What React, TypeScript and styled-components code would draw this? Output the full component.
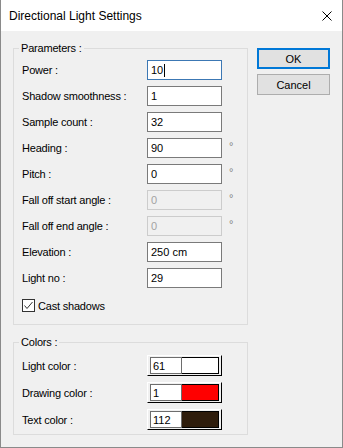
import React from 'react';
import styled, { createGlobalStyle } from 'styled-components';

const Global = createGlobalStyle`
  html, body { margin: 0; padding: 0; background: #fff; }
  #root { width: 343px; height: 448px; }
`;

const Window = styled.div`
  width: 343px;
  height: 448px;
  box-sizing: border-box;
  border: 1px solid #8a8a8a;
  border-top: none;
  display: flex;
  flex-direction: column;
  background: #f0f0f0;
  font-family: "Liberation Sans", Arial, sans-serif;
  color: #000;
`;

const TitleBar = styled.div`
  height: 31px;
  flex: none;
  background: #fff;
  display: flex;
  align-items: center;
  justify-content: space-between;
  padding: 1px 10px 0 8px;
  box-sizing: border-box;
`;

const Title = styled.span`
  font-size: 12px;
`;

const CloseIcon = styled.svg`
  width: 10px;
  height: 10px;
  display: block;
`;

const Body = styled.div`
  flex: 1;
  display: flex;
  align-items: flex-start;
  gap: 9px;
  padding: 11px 12px 0 12px;
`;

const LeftCol = styled.div`
  width: 235px;
  display: flex;
  flex-direction: column;
  gap: 11px;
`;

const Group = styled.fieldset`
  margin: 0;
  padding: 0;
  border: 1px solid #dcdcdc;
  min-width: 0;
  box-sizing: border-box;
  width: 235px;
`;

const Legend = styled.legend`
  margin-left: 5px;
  padding: 0 2px;
  font-size: 11px;
  line-height: 13px;
  letter-spacing: -0.2px;
`;

const GroupContent = styled.div<{ $pt: number; $pb: number; $gap: number }>`
  display: flex;
  flex-direction: column;
  gap: ${(p) => p.$gap}px;
  padding: ${(p) => p.$pt}px 0 ${(p) => p.$pb}px 8px;
`;

const Row = styled.div<{ $h: number }>`
  display: flex;
  align-items: center;
  height: ${(p) => p.$h}px;
`;

const Label = styled.span`
  width: 125px;
  flex: none;
  font-size: 11px;
  letter-spacing: -0.2px;
  white-space: nowrap;
`;

const TextBox = styled.div<{ $state?: 'focus' | 'disabled' }>`
  width: 75px;
  height: 20px;
  box-sizing: border-box;
  border: 1px solid
    ${(p) => (p.$state === 'focus' ? '#3c78b4' : p.$state === 'disabled' ? '#cccccc' : '#7a7a7a')};
  background: ${(p) => (p.$state === 'disabled' ? '#f0f0f0' : '#fff')};
  color: ${(p) => (p.$state === 'disabled' ? '#a3a3a3' : '#000')};
  font-size: 11px;
  padding-left: 3px;
  display: flex;
  align-items: center;
`;

const Caret = styled.span`
  display: inline-block;
  width: 1px;
  height: 13px;
  background: #000;
  margin-left: 1px;
`;

const Degree = styled.span`
  align-self: flex-start;
  margin-left: 7px;
  margin-top: 2px;
  font-size: 11px;
  line-height: 13px;
  color: #808080;
`;

const CheckRow = styled.label`
  display: flex;
  align-items: center;
  gap: 3px;
  height: 17px;
  margin-top: 3px;
  font-size: 11px;
  letter-spacing: -0.2px;
`;

const CheckBox = styled.span`
  width: 13px;
  height: 13px;
  box-sizing: border-box;
  border: 1px solid #333;
  background: #fff;
  display: flex;
  align-items: center;
  justify-content: center;
`;

const ColorFrame = styled.div`
  width: 75px;
  height: 21px;
  box-sizing: border-box;
  border: 1px solid;
  border-color: #fff #000 #000 #fff;
  padding: 1px 2px 1px 2px;
  display: flex;
`;

const ColorText = styled.div`
  width: 32px;
  box-sizing: border-box;
  border: 1px solid #6d6d6d;
  background: #fff;
  font-size: 11px;
  padding-left: 2px;
  display: flex;
  align-items: center;
`;

const Swatch = styled.div<{ $color: string }>`
  flex: 1;
  border: 1px solid #000;
  border-left: none;
  background: ${(p) => p.$color};
`;

const ButtonCol = styled.div`
  display: flex;
  flex-direction: column;
  gap: 5px;
  margin-top: 6px;
`;

const Button = styled.button<{ $default?: boolean }>`
  width: 73px;
  height: 21px;
  box-sizing: border-box;
  margin: 0;
  padding: 0;
  background: #e1e1e1;
  border: ${(p) => (p.$default ? '2px solid #0078d7' : '1px solid #adadad')};
  font-family: "Liberation Sans", Arial, sans-serif;
  font-size: 11px;
  color: #000;
`;

type Param = { label: string; value: string; state?: 'focus' | 'disabled'; degree?: boolean };

const params: Param[] = [
  { label: 'Power :', value: '10', state: 'focus' },
  { label: 'Shadow smoothness :', value: '1' },
  { label: 'Sample count :', value: '32' },
  { label: 'Heading :', value: '90', degree: true },
  { label: 'Pitch :', value: '0', degree: true },
  { label: 'Fall off start angle :', value: '0', state: 'disabled', degree: true },
  { label: 'Fall off end angle :', value: '0', state: 'disabled', degree: true },
  { label: 'Elevation :', value: '250 cm' },
  { label: 'Light no :', value: '29' },
];

const colors = [
  { label: 'Light color :', value: '61', color: '#ffffff' },
  { label: 'Drawing color :', value: '1', color: '#ff0000' },
  { label: 'Text color :', value: '112', color: '#2e1c0b' },
];

export default function App() {
  return (
    <>
      <Global />
      <Window>
        <TitleBar>
          <Title>Directional Light Settings</Title>
          <CloseIcon viewBox="0 0 10 10">
            <path d="M0.5 0.5 L9.5 9.5 M9.5 0.5 L0.5 9.5" stroke="#000" strokeWidth="1" fill="none" />
          </CloseIcon>
        </TitleBar>
        <Body>
          <LeftCol>
            <Group>
              <Legend>Parameters :</Legend>
              <GroupContent $pt={5} $pb={10} $gap={6}>
                {params.map((p) => (
                  <Row key={p.label} $h={20}>
                    <Label>{p.label}</Label>
                    <TextBox $state={p.state}>
                      {p.value}
                      {p.state === 'focus' && <Caret />}
                    </TextBox>
                    {p.degree && <Degree>°</Degree>}
                  </Row>
                ))}
                <CheckRow>
                  <CheckBox>
                    <svg width="11" height="11" viewBox="0 0 11 11">
                      <path d="M1.5 5.5 L4 8.5 L9.5 2" stroke="#333" strokeWidth="1" fill="none" />
                    </svg>
                  </CheckBox>
                  Cast shadows
                </CheckRow>
              </GroupContent>
            </Group>
            <Group>
              <Legend>Colors :</Legend>
              <GroupContent $pt={6} $pb={4} $gap={6}>
                {colors.map((c) => (
                  <Row key={c.label} $h={21}>
                    <Label>{c.label}</Label>
                    <ColorFrame>
                      <ColorText>{c.value}</ColorText>
                      <Swatch $color={c.color} />
                    </ColorFrame>
                  </Row>
                ))}
              </GroupContent>
            </Group>
          </LeftCol>
          <ButtonCol>
            <Button $default>OK</Button>
            <Button>Cancel</Button>
          </ButtonCol>
        </Body>
      </Window>
    </>
  );
}
